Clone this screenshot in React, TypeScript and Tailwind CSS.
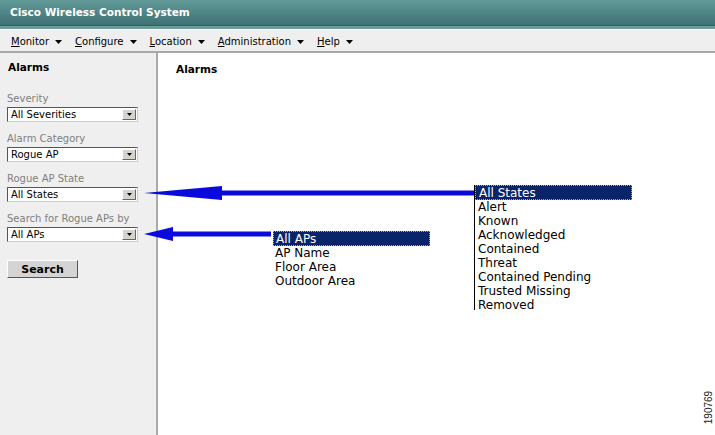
import React from "react";

const menus = ["Monitor", "Configure", "Location", "Administration", "Help"];

function FakeSelect({ value }: { value: string }) {
  return (
    <div className="flex items-center h-[15px] w-[131px] bg-white border border-t-[#555] border-l-[#555] border-r-[#ccc] border-b-[#ccc] pl-[3px] pr-[1px]">
      <span className="flex-1 text-[10px] leading-none text-black">{value}</span>
      <span className="flex items-center justify-center w-[14px] h-[11px] bg-[#d6d3ce] border border-t-[#fff] border-l-[#fff] border-r-[#666] border-b-[#666]">
        <svg width="5" height="3" viewBox="0 0 5 3">
          <path d="M0 0h5L2.5 3z" fill="#000" />
        </svg>
      </span>
    </div>
  );
}

function Field({ label, value }: { label: string; value: string }) {
  return (
    <div className="flex flex-col gap-[2px]">
      <span className="text-[10px] leading-[12px] text-[#808080]">{label}</span>
      <FakeSelect value={value} />
    </div>
  );
}

function Arrow({ width, head }: { width: number; head: number }) {
  return (
    <svg width={width} height="16" viewBox={`0 0 ${width} 16`}>
      <path d={`M0 8 L${head} 1 L${head} 5.5 L${width} 5.5 L${width} 10.5 L${head} 10.5 L${head} 15 Z`} fill="#0a0adc" />
    </svg>
  );
}

export default function App() {
  const states = ["Alert", "Known", "Acknowledged", "Contained", "Threat", "Contained Pending", "Trusted Missing", "Removed"];
  const aps = ["AP Name", "Floor Area", "Outdoor Area"];

  return (
    <div className="relative flex flex-col w-[715px] h-[435px] overflow-hidden bg-white" style={{ fontFamily: "'DejaVu Sans', Verdana, sans-serif" }}>
      {/* title bar */}
      <div className="flex items-center h-[26px] px-[10px] bg-gradient-to-b from-[#629a9a] to-[#3f7171] border-b border-[#355f5f]">
        <span className="text-[10.5px] font-bold text-white">Cisco Wireless Control System</span>
      </div>
      <div className="h-[4px] bg-[#6d9c9c] border-b border-white" />

      {/* menu bar */}
      <div className="flex items-center gap-[13px] h-[23px] pt-[2px] px-[11px] bg-[#efefef] border-b-2 border-[#a8a8a8]">
        {menus.map((m) => (
          <span key={m} className="flex items-center gap-[6px] text-[10px] text-black">
            <span>
              <span className="underline">{m[0]}</span>
              {m.slice(1)}
            </span>
            <svg width="7" height="4" viewBox="0 0 7 4">
              <path d="M0 0h7L3.5 4z" fill="#000" />
            </svg>
          </span>
        ))}
      </div>

      <div className="flex flex-1">
        {/* left panel */}
        <div className="flex flex-col w-[158px] bg-[#efefef] border-r-2 border-[#a9a9b0] pl-[7px] pt-[7px]">
          <span className="block text-[10.5px] leading-[14px] font-bold text-black pl-[1px]">Alarms</span>
          <div className="flex flex-col gap-[11px] mt-[19px]">
            <Field label="Severity" value="All Severities" />
            <Field label="Alarm Category" value="Rogue AP" />
            <Field label="Rogue AP State" value="All States" />
            <Field label="Search for Rogue APs by" value="All APs" />
          </div>
          <button className="mt-[18px] w-[71px] h-[18px] bg-[#d4d4d4] border border-t-[#fff] border-l-[#fff] border-r-[#555] border-b-[#555] text-[11px] font-bold text-black leading-none">
            Search
          </button>
        </div>

        {/* main */}
        <div className="flex-1 pl-[18px] pt-[9px]">
          <span className="block text-[10.5px] leading-[14px] font-bold text-black">Alarms</span>
        </div>
      </div>

      {/* annotation arrows */}
      <div className="absolute left-[144px] top-[185px]">
        <Arrow width={330} head={78} />
      </div>
      <div className="absolute left-[144px] top-[226px]">
        <Arrow width={127} head={29} />
      </div>

      {/* Rogue AP State list */}
      <div className="absolute left-[474px] top-[185px] w-[158px] h-[125px] border-l border-black text-[12px] leading-[14px] text-black">
        <div className="bg-[#0a246a] text-white pl-[3px] h-[15px] border border-dotted border-[#aaa]">All States</div>
        {states.map((s) => (
          <div key={s} className="pl-[3px]">{s}</div>
        ))}
      </div>

      {/* Search by list */}
      <div className="absolute left-[273px] top-[231px] w-[157px] text-[12px] leading-[14px] text-black">
        <div className="bg-[#0a246a] text-white pl-[2px] h-[15px] border border-dotted border-[#aaa]">All APs</div>
        {aps.map((s) => (
          <div key={s} className="pl-[2px]">{s}</div>
        ))}
      </div>

      {/* figure number */}
      <div className="absolute right-[-10px] top-[400px] -rotate-90 text-[10px] text-[#222]" style={{ fontFamily: "'Liberation Sans', Arial, sans-serif" }}>
        190769
      </div>
    </div>
  );
}
